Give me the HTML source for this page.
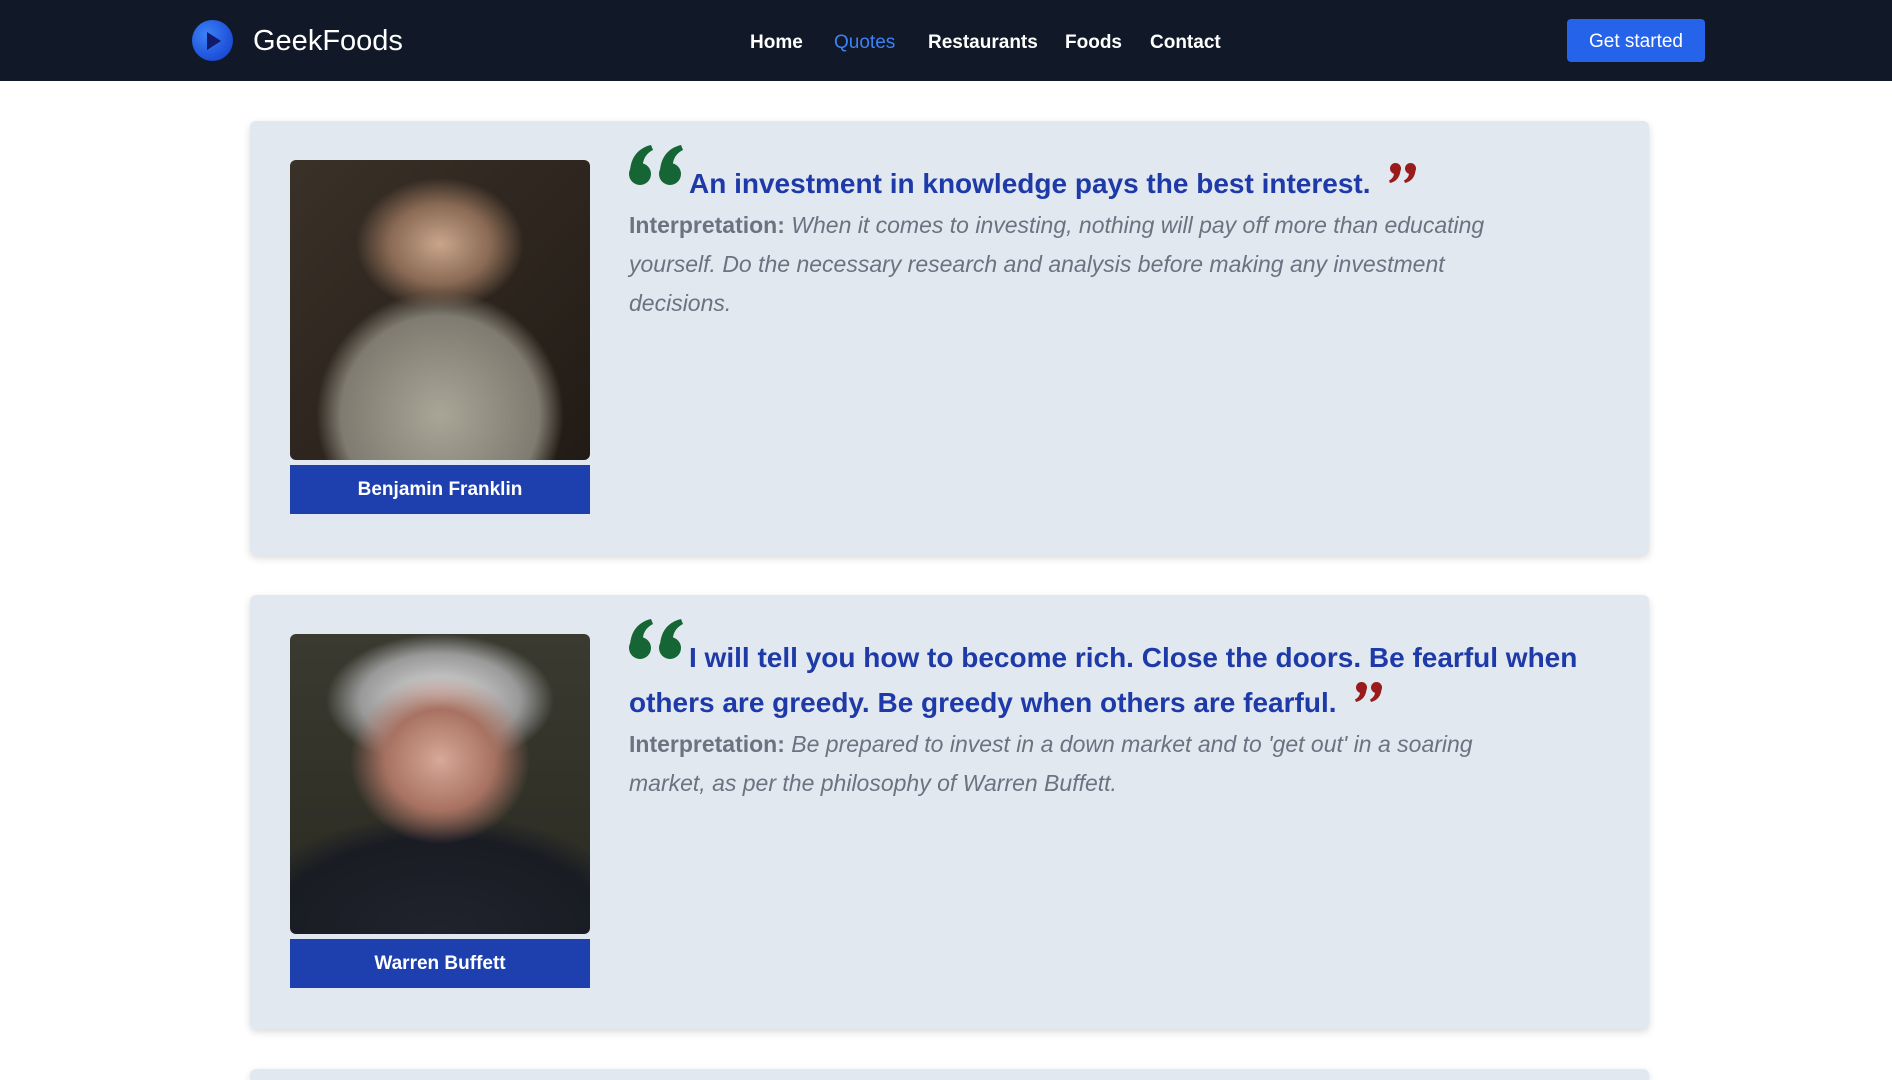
<!DOCTYPE html>
<html><head><meta charset="utf-8"><style>
*{margin:0;padding:0;box-sizing:border-box}
html,body{width:1892px;height:1080px;overflow:hidden}
body{background:#fff;font-family:"Liberation Sans",sans-serif;position:relative}
.nav{height:81px;background:#111827;position:relative}
.logo{position:absolute;left:192px;top:20px;width:41px;height:41px;border-radius:50%;background:radial-gradient(circle at 35% 35%,#3b82f6,#1d4ed8 70%,#1e40af)}
.logo:after{content:"";position:absolute;left:15px;top:12px;border-left:14px solid #111a6b;border-top:9px solid transparent;border-bottom:9px solid transparent}
.brand{position:absolute;left:253px;top:25px;color:#fff;font-size:29px}
.links a{position:absolute;top:32px;color:#fff;font-size:19px;font-weight:bold;text-decoration:none}
.btn{position:absolute;left:1567px;top:19px;width:138px;height:43px;background:#2563eb;border-radius:4px;color:#fff;font-size:19px;text-align:center;line-height:45px}
.card{position:absolute;left:250px;width:1399px;background:#e2e8f0;border-radius:6px;box-shadow:0 3px 8px rgba(0,0,0,.15)}
.img{position:absolute;left:40px;top:39px;width:300px;height:300px;border-radius:6px;overflow:hidden}
.name{position:absolute;left:40px;top:344px;width:300px;height:49px;background:#1e40af;color:#fff;font-weight:bold;font-size:19px;text-align:center;line-height:49px}
.txt{position:absolute;left:379px;top:24px;width:965px}
.q{color:#1e3aa8;font-weight:bold;font-size:28px;line-height:45px}
.oq{vertical-align:8px;margin-right:6px}
.cq{vertical-align:10px;margin-left:18px}
.i{color:#6b7280;font-size:23px;line-height:39px;font-style:italic;width:900px}
.i b{font-style:normal}
</style></head><body>
<div class="nav"><div class="logo"></div><div class="brand">GeekFoods</div>
<div class="links"><a style="left:750px">Home</a><a style="left:834px;color:#3b82f6;font-weight:normal">Quotes</a><a style="left:928px">Restaurants</a><a style="left:1065px">Foods</a><a style="left:1150px">Contact</a></div>
<div class="btn">Get started</div></div>

<div class="card" style="top:121px;height:434px">
<div class="img" style="background:radial-gradient(ellipse 28% 22% at 50% 28%,#c9a58a,#8a6a55 60%,transparent 100%),radial-gradient(ellipse 55% 55% at 50% 85%,#a9a597,#7f7b70 60%,transparent 75%),linear-gradient(135deg,#3a3128,#221b15)"></div>
<div class="name">Benjamin Franklin</div>
<div class="txt"><div class="q"><svg class="oq" width="54" height="40" viewBox="0 0 54 40"><g fill="#166534"><circle cx="11" cy="29" r="11"/><path d="M1 28C1 13 9 3 22 0L24 5C16 9 13 16 14 24Z"/><circle cx="41" cy="29" r="11"/><path d="M31 28C31 13 39 3 52 0L54 5C46 9 43 16 44 24Z"/></g></svg>An investment in knowledge pays the best interest.<svg class="cq" width="27" height="20" viewBox="0 0 54 40"><g fill="#991b1b" transform="rotate(180 27 20)"><circle cx="11" cy="29" r="11"/><path d="M1 28C1 13 9 3 22 0L24 5C16 9 13 16 14 24Z"/><circle cx="41" cy="29" r="11"/><path d="M31 28C31 13 39 3 52 0L54 5C46 9 43 16 44 24Z"/></g></svg></div>
<div class="i"><b>Interpretation:</b> When it comes to investing, nothing will pay off more than educating yourself. Do the necessary research and analysis before making any investment decisions.</div></div>
</div>

<div class="card" style="top:595px;height:434px">
<div class="img" style="background:radial-gradient(ellipse 30% 28% at 50% 42%,#d8a898,#a87262 60%,transparent 100%),radial-gradient(ellipse 38% 22% at 50% 22%,#e6e6e6,#999 70%,transparent 100%),radial-gradient(ellipse 70% 40% at 50% 100%,#20232d,#1a1c24 80%,transparent 100%),linear-gradient(#3a3a30,#2a2a22)"></div>
<div class="name">Warren Buffett</div>
<div class="txt"><div class="q"><svg class="oq" width="54" height="40" viewBox="0 0 54 40"><g fill="#166534"><circle cx="11" cy="29" r="11"/><path d="M1 28C1 13 9 3 22 0L24 5C16 9 13 16 14 24Z"/><circle cx="41" cy="29" r="11"/><path d="M31 28C31 13 39 3 52 0L54 5C46 9 43 16 44 24Z"/></g></svg>I will tell you how to become rich. Close the doors. Be fearful when others are greedy. Be greedy when others are fearful.<svg class="cq" width="27" height="20" viewBox="0 0 54 40"><g fill="#991b1b" transform="rotate(180 27 20)"><circle cx="11" cy="29" r="11"/><path d="M1 28C1 13 9 3 22 0L24 5C16 9 13 16 14 24Z"/><circle cx="41" cy="29" r="11"/><path d="M31 28C31 13 39 3 52 0L54 5C46 9 43 16 44 24Z"/></g></svg></div>
<div class="i"><b>Interpretation:</b> Be prepared to invest in a down market and to 'get out' in a soaring market, as per the philosophy of Warren Buffett.</div></div>
</div>

<div class="card" style="top:1069px;height:11px;border-radius:6px 6px 0 0"></div>
</body></html>
